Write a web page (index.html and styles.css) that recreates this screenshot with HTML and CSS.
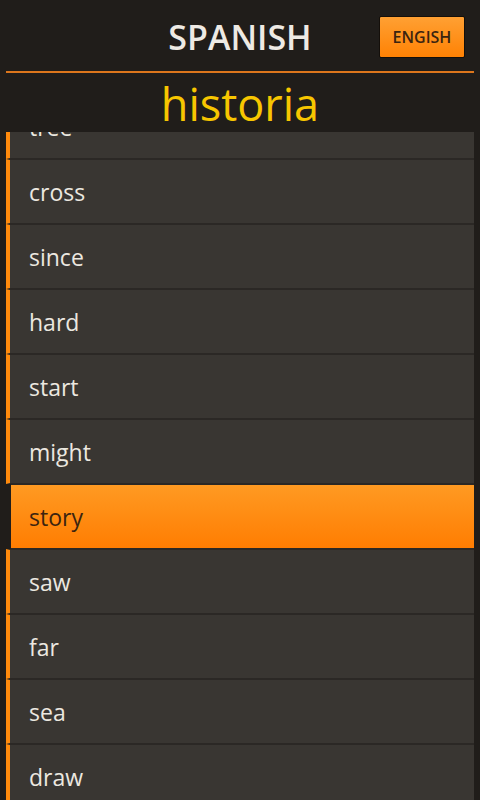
FILE: index.html
```html
<!DOCTYPE html>
<html lang="en">
<head>
    <meta charset="UTF-8">
    <meta name="viewport" content="width=device-width, initial-scale=1.0">
    <title>Spanish Words</title>
    <link rel="stylesheet" href="styles.css">
</head>
<body>
    <div id="app">
        <div class="header">
            <div class="top-bar">
                <span></span>
                <h1 class="lang-title">SPANISH</h1>
                <button class="lang-btn" type="button">ENGISH</button>
            </div>
            <div class="divider"></div>
            <div class="current-word">historia</div>
        </div>

        <div class="word-list">
            <div class="row first"><span>tree</span></div>
            <div class="row"><span>cross</span></div>
            <div class="row"><span>since</span></div>
            <div class="row"><span>hard</span></div>
            <div class="row"><span>start</span></div>
            <div class="row"><span>might</span></div>
            <div class="row selected"><span>story</span></div>
            <div class="row"><span>saw</span></div>
            <div class="row"><span>far</span></div>
            <div class="row"><span>sea</span></div>
            <div class="row"><span>draw</span></div>
        </div>
    </div>
</body>
</html>
```

FILE: styles.css
```css
body {
    font-family: "Open Sans", "DejaVu Sans", sans-serif;
    margin: 0;
    padding: 0;
    background-color: #201d1a;
    width: 480px;
    height: 800px;
    overflow: hidden;
}

#app {
    display: flex;
    flex-direction: column;
    height: 800px;
}

.header {
    padding-top: 14px;
    background-color: #201d1a;
}

.top-bar {
    display: grid;
    grid-template-columns: 1fr auto 1fr;
    align-items: center;
    height: 44px;
    padding: 0 15px;
}

.lang-title {
    margin: 0;
    font-size: 34px;
    font-weight: 600;
    color: #eeeae4;
}

.lang-btn {
    justify-self: end;
    width: 86px;
    height: 42px;
    padding: 0;
    background: linear-gradient(#ffa033, #ff8204);
    border: 1px solid #140f0a;
    border-radius: 2px;
    color: #3b2410;
    font-family: "Open Sans", sans-serif;
    font-size: 16px;
    font-weight: 600;
    cursor: pointer;
}

.divider {
    height: 2px;
    margin: 13px 6px 0 6px;
    background-color: #dc761c;
}

.current-word {
    height: 59px;
    text-align: center;
    font-size: 45px;
    line-height: 62px;
    color: #f7c600;
}

.word-list {
    flex: 1;
    overflow: hidden;
    padding-right: 6px;
}

.row {
    display: flex;
    align-items: center;
    height: 63px;
    margin-left: 6px;
    padding-left: 19px;
    background-color: #393632;
    border-left: 4px solid #ff8a0c;
    border-top: 1px solid #2b2825;
    border-bottom: 1px solid #2b2825;
    color: #ece8e0;
    font-size: 23px;
}

.row.first {
    margin-top: -38px;
}

.row.selected {
    margin-left: 11px;
    padding-left: 18px;
    border-left: none;
    background: linear-gradient(#ff9a22, #ff7d02);
    color: #3b2410;
}
```
